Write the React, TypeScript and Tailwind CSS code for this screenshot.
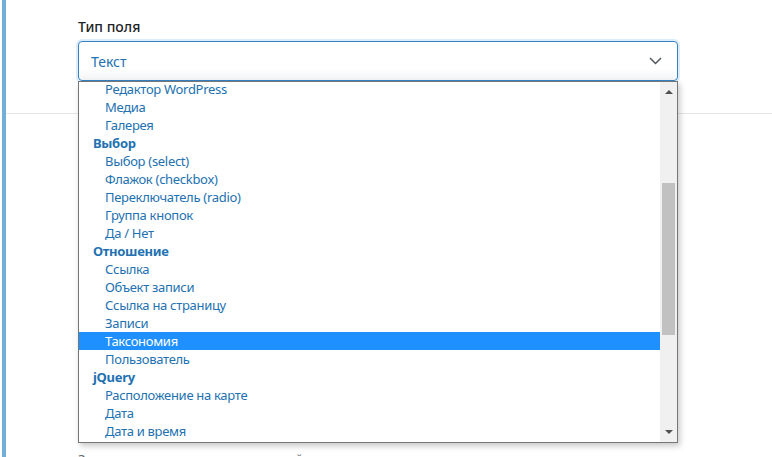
import { useState } from 'react';

type Row = { label: string; group?: boolean };

const rows: Row[] = [
  { label: 'Редактор WordPress' },
  { label: 'Медиа' },
  { label: 'Галерея' },
  { label: 'Выбор', group: true },
  { label: 'Выбор (select)' },
  { label: 'Флажок (checkbox)' },
  { label: 'Переключатель (radio)' },
  { label: 'Группа кнопок' },
  { label: 'Да / Нет' },
  { label: 'Отношение', group: true },
  { label: 'Ссылка' },
  { label: 'Объект записи' },
  { label: 'Ссылка на страницу' },
  { label: 'Записи' },
  { label: 'Таксономия' },
  { label: 'Пользователь' },
  { label: 'jQuery', group: true },
  { label: 'Расположение на карте' },
  { label: 'Дата' },
  { label: 'Дата и время' },
];

function Chevron() {
  return (
    <svg width="13" height="8" viewBox="0 0 13 8" fill="none">
      <path d="M1 1l5.5 5.5L12 1" stroke="#50575e" strokeWidth="1.5" />
    </svg>
  );
}

export default function App() {
  const [active] = useState('Таксономия');

  return (
    <div className="h-[457px] w-[772px] overflow-hidden bg-white pl-[2px] font-['Noto_Sans',sans-serif]">
      <div className="h-full border-l-4 border-[#72b0dc]">
        {/* Field: type */}
        <div className="px-[72px] pt-[17px]">
          <label className="block text-[14px] leading-[20px] font-medium text-[#1d2327]">Тип поля</label>
          <div className="relative mt-[4px] w-[600px]">
            <div className="flex h-[40px] items-center justify-between rounded-[4px] border border-[#3582c4] bg-gradient-to-b from-white from-70% to-[#f3f4f5] pl-[12px] pr-[15px] shadow-[0_0_0_2px_#dcecf8]">
              <span className="text-[14px] text-[#2271b1]">Текст</span>
              <Chevron />
            </div>

            {/* Open list */}
            <div className="absolute left-0 top-[40px] z-10 flex h-[362px] w-[600px] border border-[#767676] bg-white shadow-[2px_3px_6px_rgba(0,0,0,0.22)]">
              <div className="h-full flex-1 overflow-hidden">
                <ul className="-mt-[2px]">
                  {rows.map((r) => {
                    const on = r.label === active;
                    return (
                      <li
                        key={r.label}
                        className={`h-[18px] text-[13px] leading-[18px] tracking-[-0.3px] ${r.group ? 'pl-[14px] font-bold' : 'pl-[26px]'} ${
                          on ? 'bg-[#1e90ff] text-white' : 'text-[#2271b1]'
                        }`}
                      >
                        {r.label}
                      </li>
                    );
                  })}
                </ul>
              </div>
              <div className="flex w-[17px] flex-col items-center bg-[#f0f0f0]">
                <div className="flex h-[20px] items-center justify-center">
                  <div className="h-0 w-0 border-x-[4px] border-b-[4px] border-x-transparent border-b-[#505050]" />
                </div>
                <div className="mt-[81px] h-[152px] w-[13px] bg-[#c1c1c1]" />
                <div className="flex-1" />
                <div className="flex h-[20px] items-center justify-center">
                  <div className="h-0 w-0 border-x-[4px] border-t-[4px] border-x-transparent border-t-[#505050]" />
                </div>
              </div>
            </div>
          </div>
        </div>

        <div className="mt-[32px] border-t border-[#e6e6e6]" />

        <div className="px-[72px] pt-[335px]">
          <p className="text-[13px] leading-[20px] text-[#646970]">Значение по умолчанию для новой записи</p>
        </div>
      </div>
    </div>
  );
}
